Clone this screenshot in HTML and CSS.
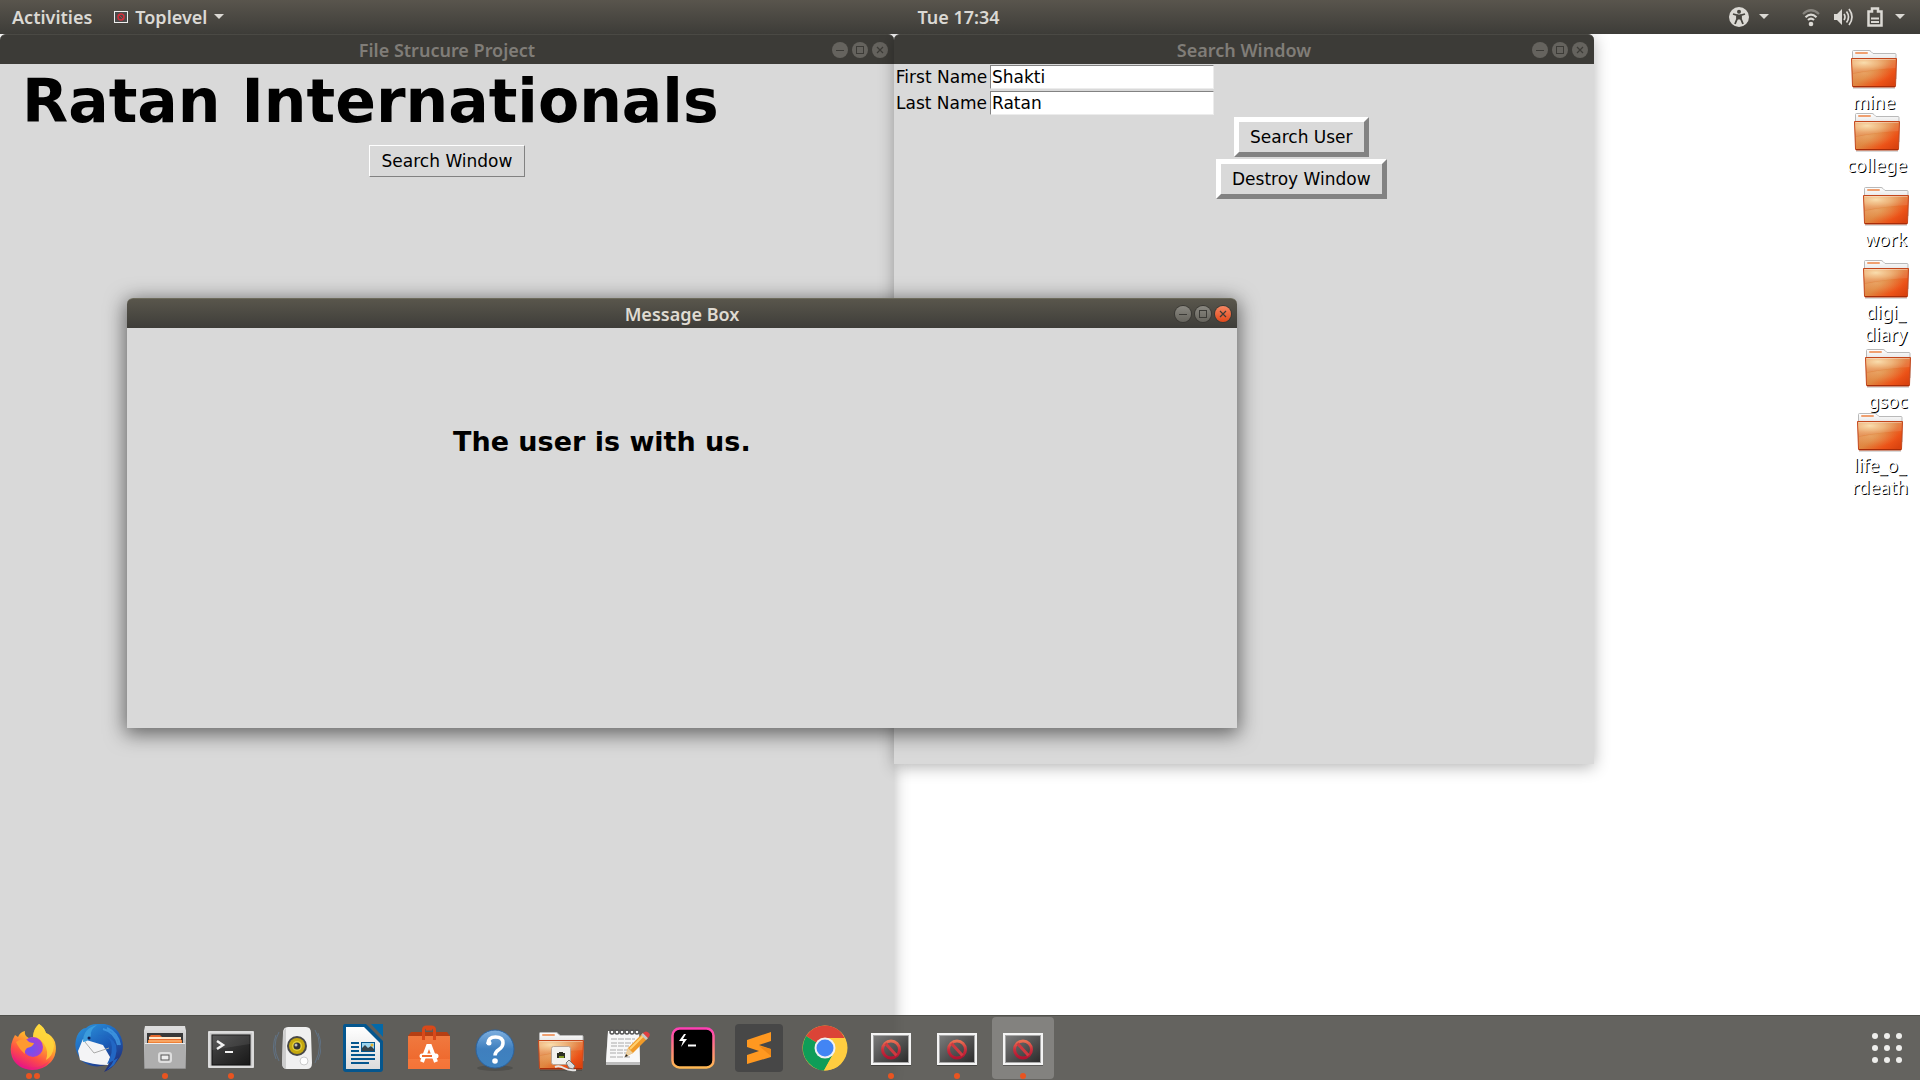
FILE: index.html
```html
<!DOCTYPE html>
<html lang="en">
<head>
<meta charset="utf-8">
<title>Desktop</title>
<link rel="stylesheet" href="styles.css">
</head>
<body>
<svg class="defs" aria-hidden="true">
  <defs>
    <linearGradient id="folderBody" x1="0" y1="0" x2="1" y2=".8">
      <stop offset="0" stop-color="#e8935c"/><stop offset=".5" stop-color="#df8640"/><stop offset=".8" stop-color="#ec5318"/><stop offset="1" stop-color="#da430f"/>
    </linearGradient>
    <radialGradient id="folderGlow" cx=".27" cy=".25" r=".65">
      <stop offset="0" stop-color="#f9dba6"/><stop offset=".5" stop-color="#f2bd80" stop-opacity=".7"/><stop offset="1" stop-color="#f0a060" stop-opacity="0"/>
    </radialGradient>
    <linearGradient id="folderBack" x1="0" y1="0" x2="0" y2="1">
      <stop offset="0" stop-color="#fff"/><stop offset=".5" stop-color="#d8d8d8"/>
    </linearGradient>
    <linearGradient id="tile" x1="0" y1="0" x2="1" y2="1">
      <stop offset="0" stop-color="#7a7a7a"/><stop offset="1" stop-color="#2c2c2c"/>
    </linearGradient>
    <linearGradient id="ban" x1="0" y1="0" x2="0" y2="1">
      <stop offset="0" stop-color="#ea7052"/><stop offset=".5" stop-color="#cc2f3c"/><stop offset="1" stop-color="#b01431"/>
    </linearGradient>
    <linearGradient id="ffFlame" x1=".8" y1="0" x2=".3" y2="1">
      <stop offset="0" stop-color="#fff04e"/><stop offset=".4" stop-color="#ffab2c"/><stop offset=".7" stop-color="#ff4f45"/><stop offset="1" stop-color="#e3108a"/>
    </linearGradient>
    <radialGradient id="ffGlobe" cx=".4" cy=".6" r=".6">
      <stop offset="0" stop-color="#6d52f2"/><stop offset="1" stop-color="#a53fd4"/>
    </radialGradient>
    <linearGradient id="bird" x1=".2" y1="0" x2=".8" y2="1">
      <stop offset="0" stop-color="#2b8fd8"/><stop offset=".5" stop-color="#1b5cb8"/><stop offset="1" stop-color="#23296e"/>
    </linearGradient>
    <linearGradient id="metal" x1="0" y1="0" x2="0" y2="1">
      <stop offset="0" stop-color="#d8d8d8"/><stop offset="1" stop-color="#8f8f8f"/>
    </linearGradient>
    <linearGradient id="screen" x1="0" y1="0" x2="1" y2="1">
      <stop offset="0" stop-color="#4a4a4a"/><stop offset="1" stop-color="#181818"/>
    </linearGradient>
    <linearGradient id="paper" x1="0" y1="0" x2="0" y2="1">
      <stop offset="0" stop-color="#fff"/><stop offset="1" stop-color="#dcdcdc"/>
    </linearGradient>
    <linearGradient id="bag" x1="0" y1="0" x2="0" y2="1">
      <stop offset="0" stop-color="#f0793f"/><stop offset="1" stop-color="#ee6428"/>
    </linearGradient>
    <linearGradient id="help" x1="0" y1="0" x2="0" y2="1">
      <stop offset="0" stop-color="#7fb0e0"/><stop offset=".5" stop-color="#3f7fbe"/><stop offset="1" stop-color="#3e83c0"/>
    </linearGradient>
    <linearGradient id="neon" x1="0" y1="0" x2="0" y2="1">
      <stop offset="0" stop-color="#ff3fb4"/><stop offset=".5" stop-color="#ff7f80"/><stop offset="1" stop-color="#ffb852"/>
    </linearGradient>
    <symbol id="folder" viewBox="0 0 48 40">
      <path d="M3 39h42" stroke="#000" stroke-opacity=".15" stroke-width="2"/>
      <path d="M2.500 30V2.500q0-1 1-1H19q1 0 2 1l2 2H45q1 0 1 1V30z" fill="url(#folderBack)" stroke="#b9b9b9"/>
      <rect x="5" y="3" width="13" height="2" rx="1" fill="#f0a070"/>
      <path d="M1.500 9.500h45L45.500 37q0 1-1 1H3.500q-1 0-1-1z" fill="url(#folderBody)" stroke="#c4471c"/>
      <path d="M2 10h44L45.500 20Q26 20 3 25z" fill="url(#folderGlow)"/>
      <path d="M3 25Q26 20 45.500 20L45 37H3z" fill="url(#folderGlow)" opacity=".3"/>
      <path d="M2 10h44L45.500 19Q26 20 3 24z" fill="#fff" opacity=".1"/>
      <path d="M2.500 10.500h43" stroke="#fff" stroke-opacity=".35"/>
      <path d="M3 37.500h42" stroke="#a82c08"/>
    </symbol>
    <symbol id="unknown" viewBox="0 0 48 48">
      <rect x="4" y="41" width="40" height="1" fill="#000" opacity=".3"/>
      <rect x="4" y="9" width="40" height="32" fill="#f4f4f4"/>
      <rect x="6" y="11" width="36" height="28" fill="#a8a8a8"/>
      <rect x="7" y="12" width="34" height="26" fill="url(#tile)"/>
      <circle cx="24" cy="25.500" r="8.500" fill="none" stroke="url(#ban)" stroke-width="3"/>
      <path d="M18.500 19.500l11 12" stroke="#cf3a40" stroke-width="3"/>
    </symbol>
    <symbol id="minimize" viewBox="0 0 16 16"><path d="M4 8.500h8" fill="none" stroke="currentColor"/></symbol>
    <symbol id="maximize" viewBox="0 0 16 16"><rect x="4.500" y="4.500" width="7" height="7" fill="none" stroke="currentColor"/></symbol>
    <symbol id="close" viewBox="0 0 16 16"><path d="M5 5l6 6M11 5l-6 6" fill="none" stroke="currentColor" stroke-width="1.200"/></symbol>
    <symbol id="caret" viewBox="0 0 10 6"><path d="M0 0h10L5 5z" fill="currentColor"/></symbol>
  </defs>
</svg>

<header class="panel">
  <div class="panel-start">
    <button class="panel-item">Activities</button>
    <button class="panel-item app-menu">
      <svg class="app-icon" viewBox="0 0 14 12"><rect width="14" height="12" fill="#eee"/><rect x="1" y="1" width="12" height="10" fill="#4b4b4b"/><circle cx="7" cy="6" r="3" fill="none" stroke="#d22f3a" stroke-width="1.500"/><path d="M5 4l4 4" stroke="#d22f3a"/></svg>
      Toplevel
      <svg class="caret"><use href="#caret"/></svg>
    </button>
  </div>
  <button class="panel-item">Tue 17:34</button>
  <div class="panel-end">
    <button class="panel-item tray" aria-label="Accessibility">
      <svg class="tray-icon" viewBox="0 0 20 20"><circle cx="10" cy="10" r="10" fill="currentColor"/><circle cx="10" cy="4.700" r="2" fill="#47453f"/><path d="M4 7l4 1.200V12l-2 5M16 7l-4 1.200V12l2 5" fill="none" stroke="#47453f" stroke-width="1.800"/><path d="M8 7.500h4v5H8z" fill="#47453f"/></svg>
      <svg class="caret"><use href="#caret"/></svg>
    </button>
    <button class="panel-item tray" aria-label="System">
      <svg class="tray-icon" viewBox="0 0 20 20"><g fill="none" stroke="currentColor" stroke-width="2.200"><path d="M2 7q8-7.500 16 0" opacity=".4"/><path d="M4.500 10.200q5.500-5 11 0"/><path d="M7 13q3-2.600 6 0"/></g><circle cx="10" cy="17" r="2.300" fill="currentColor"/></svg>
      <svg class="tray-icon" viewBox="0 0 20 20"><path d="M1 7h3l5-5v16l-5-5H1z" fill="currentColor"/><path d="M11 7q2 3 0 6M13.500 4.500q4 5.500 0 11M16 2q6 8 0 16" fill="none" stroke="currentColor" stroke-width="1.700"/></svg>
      <svg class="tray-icon" viewBox="0 0 20 20"><path d="M3.500 4.500H7v-3h6v3h3.500v14h-13z" fill="none" stroke="currentColor" stroke-width="2.500"/><path d="M6 11.500h8M6 15h8" stroke="currentColor" stroke-width="2"/></svg>
      <svg class="caret"><use href="#caret"/></svg>
    </button>
  </div>
</header>

<main class="desktop">
  <nav aria-label="Desktop folders">
    <a href="#mine" class="shortcut at-mine"><svg><use href="#folder"/></svg><span>mine</span></a>
    <a href="#college" class="shortcut at-college"><svg><use href="#folder"/></svg><span>college</span></a>
    <a href="#work" class="shortcut at-work"><svg><use href="#folder"/></svg><span>work</span></a>
    <a href="#digi_diary" class="shortcut at-diary"><svg><use href="#folder"/></svg><span>digi_<br>diary</span></a>
    <a href="#gsoc" class="shortcut at-gsoc"><svg><use href="#folder"/></svg><span>gsoc</span></a>
    <a href="#life" class="shortcut at-life"><svg><use href="#folder"/></svg><span>life_o_<br>rdeath</span></a>
  </nav>

  <section class="window project">
    <div class="titlebar"><h2>File Strucure Project</h2>
      <div class="controls"><button aria-label="Minimize"><svg><use href="#minimize"/></svg></button><button aria-label="Maximize"><svg><use href="#maximize"/></svg></button><button aria-label="Close"><svg><use href="#close"/></svg></button></div>
    </div>
    <div class="project-body">
      <h1>Ratan Internationals</h1>
      <button class="tk-button thin">Search Window</button>
    </div>
  </section>

  <section class="window search">
    <div class="titlebar"><h2>Search Window</h2>
      <div class="controls"><button aria-label="Minimize"><svg><use href="#minimize"/></svg></button><button aria-label="Maximize"><svg><use href="#maximize"/></svg></button><button aria-label="Close"><svg><use href="#close"/></svg></button></div>
    </div>
    <form class="search-body">
      <label for="first">First Name</label><input id="first" type="text" value="Shakti">
      <label for="last">Last Name</label><input id="last" type="text" value="Ratan">
      <button type="button" class="tk-button find">Search User</button>
      <button type="button" class="tk-button destroy">Destroy Window</button>
    </form>
  </section>

  <section class="window message active">
    <div class="titlebar"><h2>Message Box</h2>
      <div class="controls"><button aria-label="Minimize"><svg><use href="#minimize"/></svg></button><button aria-label="Maximize"><svg><use href="#maximize"/></svg></button><button class="close" aria-label="Close"><svg><use href="#close"/></svg></button></div>
    </div>
    <p class="message-body">The user is with us.</p>
  </section>
</main>

<footer class="dock">
  <button class="launcher run2" aria-label="Firefox"><svg viewBox="0 0 48 48">
    <path d="M30 0q5 3 7 9 6 2 9 9 3 12-4 20-8 8-19 8Q8 45 3 33 0 24 4 15l2-4 3 2q2-5 7-6-1 5 4 7l4-1q1-9 6-13z" fill="url(#ffFlame)"/>
    <path d="M30 0q5 3 7 9 7 4 8 13-1 10-8 14 3-9-2-16-5-7-11-7 0-8 6-13z" fill="#ffd83c" opacity=".8"/>
    <circle cx="24" cy="23" r="10" fill="url(#ffGlobe)"/>
    <path d="M7 18q5-4 11-2 2 3 7 3-1 4-7 5-3 3-2 6-6-5-9-12z" fill="#ff9a30"/>
    <path d="M3 24q1 13 12 18 15 5 26-6-8 13-24 9Q4 41 3 24z" fill="#e8198a" opacity=".4"/>
  </svg></button>
  <button class="launcher" aria-label="Thunderbird"><svg viewBox="0 0 48 48">
    <path d="M22 0q18-2 24 13 5 13-3 23-6 9-14 12l5-8Q18 46 7 37-3 25 2 12q4-8 9-8 4-4 11-4z" fill="url(#bird)"/>
    <path d="M3 27l5-12 20 6 7 12-2 8q-16 0-28-5z" fill="#f4f4f6"/>
    <path d="M10 18l9 11 15-5" fill="none" stroke="#aaa"/>
    <path d="M8 18Q8 4 22 1q-7 5-6 10-2 7-8 7z" fill="#3b9bdc"/>
    <path d="M20 12q13-2 16 6 3 10-4 22l11-6-4 7-7 5q12-13 9-25-6-12-21-9z" fill="#2267c4"/>
    <path d="M28 5q12 3 15 16M32 4q11 5 13 17" fill="none" stroke="#47a3e8" stroke-width="2" opacity=".7"/>
    <circle cx="14" cy="14" r="1.500" fill="#111c50"/>
  </svg></button>
  <button class="launcher run1" aria-label="Files"><svg viewBox="0 0 48 48">
    <path d="M4 2h40l1 5H3z" fill="#ddd"/><rect x="3" y="6" width="42" height="39" rx="1" fill="url(#metal)"/>
    <rect x="6" y="9" width="36" height="12" fill="#383838"/><path d="M8 13l2-2h9l2 2h19v8H8z" fill="#e4682c"/><path d="M8 14h32" stroke="#ffe6c8" stroke-width="2"/><path d="M7 16h34v5H7z" fill="#ee8035"/><path d="M8 17h32" stroke="#ffc890"/>
    <rect x="4" y="20" width="40" height="24" fill="#aeaeae"/><path d="M4 19.500h40" stroke="#eee"/>
    <rect x="17" y="28" width="14" height="11" rx="3" fill="#dedede"/><rect x="20" y="31" width="8" height="5" fill="#eee" stroke="#555"/>
  </svg></button>
  <button class="launcher run1" aria-label="Terminal"><svg viewBox="0 0 48 48">
    <rect x="1" y="7" width="46" height="37" rx="1" fill="#c9c9c9"/><rect x="2" y="8" width="44" height="35" fill="none" stroke="#eee"/><rect x="5" y="11" width="38" height="30" fill="url(#screen)" stroke="#111"/><path d="M5 11h38v9L5 26z" fill="#fff" opacity=".08"/>
    <path d="M10 17l6 4-6 4" fill="none" stroke="#f2f2f2" stroke-width="2.500"/><path d="M18 28h8" stroke="#f2f2f2" stroke-width="2"/>
  </svg></button>
  <button class="launcher" aria-label="Rhythmbox"><svg viewBox="0 0 48 48">
    <g fill="none" stroke="#6285ad" opacity=".5"><path d="M6 8q-8 14 0 29M3 11q-5 12 0 24M42 6q9 15 0 33M45 9q6 14 0 27"/></g>
    <path d="M15 3h18q5 0 5 6l1 30q0 6-5 6H14q-5 0-5-6l1-30q0-6 5-6z" fill="#f0f0f0"/><path d="M13 4q-3 2-3 8L9 40q1 4 4 5z" fill="#bdbdbd" opacity=".7"/>
    <circle cx="24" cy="22" r="10" fill="#484848"/><circle cx="24" cy="22" r="8" fill="#c5a80e"/><circle cx="24" cy="22" r="5" fill="#e4cf3a"/><circle cx="24" cy="22" r="3.500" fill="#333"/><circle cx="23" cy="21" r="1.500" fill="#bbb"/><circle cx="31" cy="37" r="4" fill="#fff" stroke="#ccc"/>
  </svg></button>
  <button class="launcher" aria-label="LibreOffice Writer"><svg viewBox="0 0 48 48">
    <path d="M6 0h21l17 17v28q0 3-3 3H7q-3 0-3-3V3q0-3 2-3z" fill="#04568e"/><path d="M32 0h12v13z" fill="#0469a8"/><path d="M7 3h18l16 16v26H7z" fill="url(#paper)"/>
    <path d="M12 19h8M12 23h8M12 27h8M12 31h24M12 35h24M12 39h18" stroke="#04568e" stroke-width="2"/>
    <rect x="22.500" y="18.500" width="13" height="9" fill="#9cd4ee" stroke="#04568e"/><path d="M23 27v-3l3-3 3 3 3-2 3 3v2z" fill="#36434a"/><circle cx="33" cy="21" r="1.500" fill="#e7b52c"/>
  </svg></button>
  <button class="launcher" aria-label="Ubuntu Software"><svg viewBox="0 0 48 48">
    <path d="M3 12l3-4h36l3 4z" fill="#b53f14"/><path d="M3 12h42v33H3z" fill="url(#bag)"/><path d="M3 35h42v10H3z" fill="#ff8c50" opacity=".4"/>
    <path d="M18.500 16V6q0-3 3-3h5q3 0 3 3v10M21 5h6" fill="none" stroke="#d8491a" stroke-width="3"/>
    <path d="M17 38l6-16h2l6 16" fill="none" stroke="#fff" stroke-width="4"/><path d="M17 32h14" stroke="#fff" stroke-width="5" stroke-linecap="round"/><path d="M17 32h10" stroke="#ef6b2f" stroke-width="2"/>
  </svg></button>
  <button class="launcher" aria-label="Help"><svg viewBox="0 0 48 48">
    <ellipse cx="24" cy="44" rx="18" ry="3" opacity=".15"/><circle cx="24" cy="25" r="19" fill="url(#help)" stroke="#2c639e"/>
    <path d="M17 20q0-7 7.500-7t7.500 6q0 4-4 6.500-4 2.500-4 6" fill="none" stroke="#fff" stroke-width="3.500"/><circle cx="24" cy="37" r="2.800" fill="#fff"/><circle cx="18" cy="19" r="2.500" fill="#fff"/>
  </svg></button>
  <button class="launcher" aria-label="Network share"><svg viewBox="0 0 48 48">
    <use href="#folder" y="7" width="48" height="40"/>
    <rect x="14.500" y="22.500" width="19" height="18" rx="2" fill="#f3f1ee" stroke="#b9a596"/><path d="M20 34v-5h2v-1h4v1h2v5z" fill="#2d2d20"/><path d="M22 33h5" stroke="#7f9620" stroke-width="2"/>
    <path d="M29 39l3-3 6 6-2 3-4-1z" fill="#ddd" stroke="#777"/><path d="M18 43q4-2 9 1t12 2" fill="none" stroke="#e6e6e6" stroke-width="2"/>
  </svg></button>
  <button class="launcher" aria-label="Text Editor"><svg viewBox="0 0 48 48">
    <path d="M3 39l2-31h31l1 31v2H3z" fill="#bdbdbd"/><path d="M3 38L5 7h31l1 31z" fill="#f8f8f8"/>
    <path d="M8 15h24M8 19h22M8 22h18M7 26h24M7 29h16M7 33h20" stroke="#aaa" stroke-dasharray="6 1"/>
    <g fill="none" stroke="#555" stroke-width="1.500"><circle cx="9" cy="8" r="2"/><circle cx="14" cy="8" r="2"/><circle cx="19" cy="8" r="2"/><circle cx="24" cy="8" r="2"/><circle cx="29" cy="8" r="2"/><circle cx="34" cy="8" r="2"/></g>
    <path d="M22 33l3-9 15-15 5 5-15 15z" fill="#f09a28"/><path d="M27 25l14-14" stroke="#ffd070" stroke-width="2"/><path d="M22 33l3-9 5 5z" fill="#ecd0a0"/><path d="M22 33l1-3 2 2z" fill="#222"/><path d="M38 11l2-2 5 5-2 2z" fill="#c7c7c7"/><path d="M40 9q3-3 6 0 2 2-1 5z" fill="#df3f42"/>
  </svg></button>
  <button class="launcher" aria-label="Hyper"><svg viewBox="0 0 48 48">
    <rect x="3.500" y="4.500" width="41" height="39" rx="7" fill="#000" stroke="url(#neon)" stroke-width="2.500"/><path d="M15 10l-5 7h4l-2 6 6-8h-4l3-5z" fill="#fff"/><path d="M19 21.500h8" stroke="#fff" stroke-width="2"/>
  </svg></button>
  <button class="launcher" aria-label="Sublime Text"><svg viewBox="0 0 48 48">
    <rect width="48" height="48" rx="4" fill="#474747"/><path d="M12 16l24-8v9l-12 4 12 4v8l-24 7v-9l12-4-12-4z" fill="#ff9820"/><path d="M24 22l12 3v7z" fill="#e27c10" opacity=".6"/>
  </svg></button>
  <button class="launcher" aria-label="Chrome"><svg viewBox="0 0 48 48">
    <circle cx="24" cy="24" r="22.500" fill="#ffcd40"/><path d="M24 24L5 12Q12 1.500 24 1.500 38 2 43.500 14H24z" fill="#db4437"/><path d="M24 24L5 12Q-1 23 4 34q7 12 19 12.500L32 30z" fill="#0f9d58"/><path d="M24 14h20q3 8 1 16-5 16-22 16.500L33 29z" fill="#ffcd40"/>
    <circle cx="24" cy="24" r="10.500" fill="#f1f1f1"/><circle cx="24" cy="24" r="8.500" fill="#4285f4"/>
  </svg></button>
  <button class="launcher run1" aria-label="File Strucure Project"><svg><use href="#unknown"/></svg></button>
  <button class="launcher run1" aria-label="Search Window"><svg><use href="#unknown"/></svg></button>
  <button class="launcher run1 focused" aria-label="Toplevel"><svg><use href="#unknown"/></svg></button>
  <button class="launcher apps" aria-label="Show Applications"><svg viewBox="0 0 48 48" fill="#eeeeec"><circle cx="12" cy="12" r="3"/><circle cx="24" cy="12" r="3"/><circle cx="36" cy="12" r="3"/><circle cx="12" cy="24" r="3"/><circle cx="24" cy="24" r="3"/><circle cx="36" cy="24" r="3"/><circle cx="12" cy="36" r="3"/><circle cx="24" cy="36" r="3"/><circle cx="36" cy="36" r="3"/></svg></button>
</footer>
</body>
</html>
```
FILE: styles.css
```css
* { box-sizing: border-box; }
body {
  margin: 0;
  height: 100vh;
  overflow: hidden;
  display: flex;
  flex-direction: column;
  background: #fff;
  font-family: "DejaVu Sans", sans-serif;
  font-size: 17px;
  color: #000;
}
button { font: inherit; color: inherit; border: 0; padding: 0; background: none; }
h1, h2, p { margin: 0; }
svg { display: block; flex: none; }
.defs { position: absolute; width: 0; height: 0; }

/* Top panel */
.panel {
  height: 34px;
  display: grid;
  grid-template-columns: 1fr auto 1fr;
  align-items: center;
  padding: 0 15px 0 12px;
  background: linear-gradient(#59554d, #3d3c38);
  color: #dbd9d4;
  font: 600 18px/24px "Noto Sans", sans-serif;
  text-shadow: 0 -1px #2b2a27;
  position: relative;
  z-index: 2;
}
.panel-start, .panel-end, .panel-item { display: flex; align-items: center; }
.panel-start { gap: 22px; }
.panel-end { justify-content: flex-end; gap: 32px; }
.app-menu { gap: 7px; }
.app-icon { width: 14px; height: 12px; }
.caret { width: 10px; height: 6px; }
.tray { gap: 12px; }
.tray .caret { margin-left: -2px; }
.tray-icon { width: 20px; height: 20px; }

/* Desktop and its windows */
.desktop { flex: 1; position: relative; }
.window {
  position: absolute;
  background: #d9d9d9;
  border-radius: 6px 6px 0 0;
  box-shadow: 0 3px 16px rgba(0, 0, 0, .3);
}
.project { left: 0; top: 0; width: 894px; bottom: -65px; }
.search { left: 894px; top: 0; width: 700px; height: 730px; }
.message { left: 127px; top: 264px; width: 1110px; height: 430px; }
.active { box-shadow: 0 4px 20px 2px rgba(0, 0, 0, .55); }

.titlebar {
  height: 30px;
  display: grid;
  grid-template-columns: 1fr auto 1fr;
  align-items: center;
  padding: 0 6px;
  border-radius: 6px 6px 0 0;
  border-top: 1px solid #4a4944;
  background: #3c3b37;
  color: #807d78;
}
.titlebar h2 {
  grid-column: 2;
  font: 600 18px/24px "Noto Sans", sans-serif;
}
.controls { display: flex; justify-content: flex-end; gap: 4px; }
.controls button {
  width: 16px;
  height: 16px;
  border-radius: 50%;
  background: #65635e;
  color: #3c3b37;
}
.controls svg { width: 16px; height: 16px; }
.active .titlebar {
  background: linear-gradient(#59564c, #3e3d39);
  border-top-color: #6c6a5b;
  color: #dfdbd2;
}
.active .controls button {
  background: linear-gradient(#8a8881, #66645d);
  box-shadow: 0 0 0 1px #3a3935;
}
.active .controls .close { background: linear-gradient(#f58662, #e2481a); }

/* Window contents */
.tk-button {
  border: 5px solid;
  border-color: #fff #828282 #828282 #fff;
  background: #d9d9d9;
  height: 40px;
  padding: 0 11px;
  line-height: 20px;
}
.tk-button.thin { border-width: 1px; height: 32px; padding: 0 12px; }

.project-body { padding: 2px 22px; display: flex; flex-direction: column; align-items: center; gap: 9px; }
.project-body h1 { align-self: flex-start; font-size: 60px; line-height: 70px; }

.search-body {
  display: grid;
  grid-template-columns: 95px 226px max-content;
  grid-template-rows: 26px 26px 42px 42px;
  align-items: center;
}
.search-body label { text-align: center; grid-column: 1; }
.search-body input {
  width: 224px;
  height: 24px;
  padding: 0 1px;
  border: 1px solid;
  border-color: #828282 #ececec #ececec #828282;
  background: #fff;
  font: inherit;
  color: inherit;
  margin-left: 1px;
}
.search-body .tk-button { grid-column: 3; justify-self: center; margin: 0 1px; }
.search-body .find { grid-row: 3; }
.search-body .destroy { grid-row: 4; }

.message-body { padding: 98px 326px; font-size: 27px; line-height: 32px; font-weight: bold; }

/* Desktop shortcuts */
.shortcut {
  position: absolute;
  width: 80px;
  display: flex;
  flex-direction: column;
  align-items: center;
  gap: 2px;
  color: #fff;
  text-decoration: none;
  text-align: center;
  font: 18px/22px "Noto Sans", sans-serif;
  text-shadow: 1px 1px #000;
}
.shortcut svg { width: 48px; height: 40px; }
.at-mine { right: 6px; top: 15px; }
.at-college { right: 3px; top: 78px; }
.at-work { right: -6px; top: 152px; }
.at-diary { right: -6px; top: 225px; }
.at-gsoc { right: -8px; top: 314px; }
.at-life { right: 0; top: 378px; }

/* Dock */
.dock {
  height: 65px;
  display: flex;
  align-items: center;
  background: rgba(77, 76, 71, .87);
  border-top: 1px solid #50504b;
  position: relative;
  z-index: 2;
}
.launcher {
  width: 62px;
  height: 62px;
  margin: 0 2px;
  border-radius: 4px;
  display: flex;
  align-items: center;
  justify-content: center;
  position: relative;
}
.launcher svg { width: 48px; height: 48px; }
.focused { background: rgba(255, 255, 255, .2); }
.run1::after, .run2::after {
  content: "";
  position: absolute;
  bottom: 0;
  width: 6px;
  height: 6px;
  border-radius: 50%;
  background: #e95420;
}
.run2::after { left: 24px; box-shadow: 8px 0 #e95420; }
.apps { margin-left: auto; }
```
